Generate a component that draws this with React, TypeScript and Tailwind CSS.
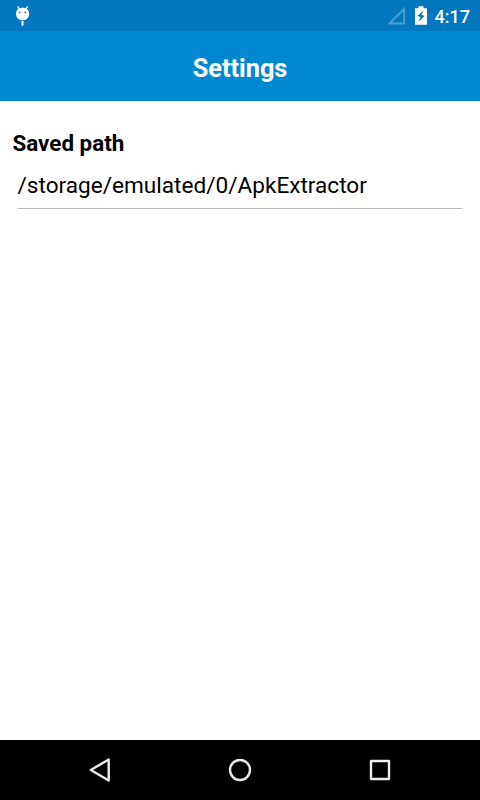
function DebugIcon() {
  return (
    <svg className="h-[31px] w-[20px]" viewBox="12 0 20 31" fill="white">
      <path d="M17.600 6.300l2 3M27.600 6.300l-2 3" stroke="white" strokeWidth="1.200" />
      <path d="M16 13.800C16 10 18.600 7.800 22.600 7.800s6.600 2.200 6.600 6c0 3.800-2.600 6.400-6.600 6.400S16 17.600 16 13.800z" />
      <rect x="21.500" y="20.800" width="2" height="4.800" />
      <circle cx="19.800" cy="12.300" r="0.900" fill="#0277bd" />
      <circle cx="25.200" cy="12.300" r="0.900" fill="#0277bd" />
    </svg>
  );
}

function SignalIcon() {
  return (
    <svg className="h-[19px] w-[19px]" viewBox="0 0 19 19" fill="none">
      <path d="M2.500 17.500H17.200V2.800z" stroke="#4d9fd0" strokeWidth="1.900" />
    </svg>
  );
}

function BatteryIcon() {
  return (
    <svg className="h-[19px] w-[12px]" viewBox="0 0 12 19">
      <path d="M3.500 0.300h5v1.900H12v16.500H0V2.200h3.500z" fill="white" />
      <path d="M8.600 4.600L2.300 9.900L5.500 11L3.400 15.800L9.700 9.900L6.500 8.700z" fill="#0277bd" />
    </svg>
  );
}

function StatusBar() {
  return (
    <div className="flex h-[31px] items-center justify-between bg-[#0277bd] pl-3 pr-2.5">
      <DebugIcon />
      <div className="flex items-center">
        <SignalIcon />
        <div className="ml-[9px]">
          <BatteryIcon />
        </div>
        <span className="ml-[8px] pt-[2px] text-[18px] leading-none font-medium text-white">
          4:17
        </span>
      </div>
    </div>
  );
}

function NavBar() {
  return (
    <nav className="flex h-[60px] items-center justify-between bg-black px-[88px]">
      <button aria-label="Back">
        <svg className="block size-6" viewBox="0 0 24 24" fill="none">
          <path
            d="M2.800 12L20.700 1.500V22.500z"
            stroke="#eeeeee"
            strokeWidth="2.400"
            strokeLinejoin="round"
          />
        </svg>
      </button>
      <button aria-label="Home">
        <svg className="block size-6" viewBox="0 0 24 24" fill="none">
          <circle cx="12" cy="12" r="10" stroke="#e8e8e8" strokeWidth="2.400" />
        </svg>
      </button>
      <button aria-label="Recent apps">
        <svg className="block size-6" viewBox="0 0 24 24" fill="none">
          <rect
            x="3"
            y="3"
            width="18"
            height="18"
            stroke="#eeeeee"
            strokeWidth="2.400"
            strokeLinejoin="round"
          />
        </svg>
      </button>
    </nav>
  );
}

export default function App() {
  return (
    <div className="flex h-[800px] w-[480px] flex-col overflow-hidden bg-white font-['Roboto',sans-serif]">
      <StatusBar />
      <header className="flex h-[70px] items-center justify-center bg-[#0288d1] pt-[5px]">
        <h1 className="text-[25.300px] leading-8 font-bold text-white">Settings</h1>
      </header>
      <main className="flex-1 px-[12.500px] pt-[27px] text-black">
        <h2 className="text-[22.400px] leading-[30px] font-bold">Saved path</h2>
        <div className="mx-[5px] h-[51px] w-[444px] border-b border-[#b8b8b8] pt-[13px] text-[22.600px] leading-[30px]">
          /storage/emulated/0/ApkExtractor
        </div>
      </main>
      <NavBar />
    </div>
  );
}
